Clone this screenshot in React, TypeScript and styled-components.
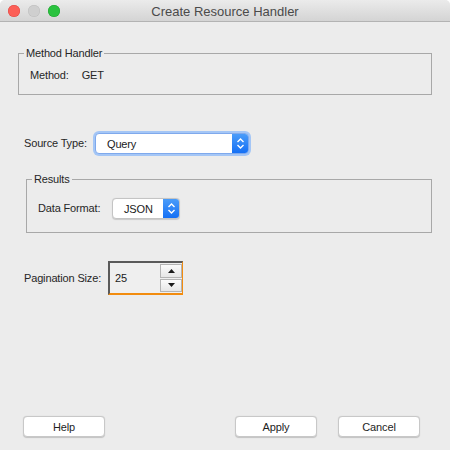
import React from "react";
import styled, { createGlobalStyle } from "styled-components";

const GlobalStyle = createGlobalStyle`
  html, body {
    margin: 0;
    padding: 0;
    background: #ffffff;
  }
  body {
    font-family: "Liberation Sans", Arial, sans-serif;
    -webkit-font-smoothing: antialiased;
  }
`;

const Window = styled.div`
  width: 450px;
  height: 450px;
  background: #ececec;
  border-radius: 5px 5px 0 0;
  overflow: hidden;
  display: flex;
  flex-direction: column;
  box-sizing: border-box;
`;

const TitleBar = styled.div`
  height: 21px;
  flex: none;
  display: flex;
  align-items: center;
  position: relative;
  background: linear-gradient(#ebebeb, #d4d4d4);
  border-bottom: 1px solid #b3b3b3;
`;

const Lights = styled.div`
  display: flex;
  gap: 8px;
  padding-left: 8px;
  padding-top: 1px;
`;

const Light = styled.span<{ $color: string; $edge: string }>`
  width: 12px;
  height: 12px;
  border-radius: 50%;
  background: ${(p) => p.$color};
  box-shadow: inset 0 0 0 0.5px ${(p) => p.$edge};
`;

const Title = styled.div`
  position: absolute;
  left: 0;
  right: 0;
  top: 0;
  bottom: 0;
  display: flex;
  align-items: center;
  justify-content: center;
  font-size: 13px;
  color: #4a4a4a;
  pointer-events: none;
  padding-top: 1px;
`;

const Body = styled.div`
  flex: 1;
  display: flex;
  flex-direction: column;
  padding: 0 18px 13px 18px;
  font-size: 11px;
  letter-spacing: -0.15px;
  color: #262626;
`;

const Group = styled.div<{ $top: number; $indent?: number }>`
  position: relative;
  margin-top: ${(p) => p.$top}px;
  margin-left: ${(p) => p.$indent ?? 0}px;
  border: 1px solid #a8a8a8;
`;

const Legend = styled.span`
  position: absolute;
  top: -7px;
  left: 5px;
  padding: 0 2px;
  line-height: 13px;
  background: #ececec;
`;

const GroupInner = styled.div<{ $pad: string }>`
  padding: ${(p) => p.$pad};
`;

const Row = styled.div<{ $top?: number; $left?: number }>`
  display: flex;
  align-items: center;
  margin-top: ${(p) => p.$top ?? 0}px;
  padding-left: ${(p) => p.$left ?? 0}px;
`;

const Label = styled.span<{ $width?: number }>`
  line-height: 15px;
  ${(p) => (p.$width ? `width: ${p.$width}px;` : "")}
  flex: none;
`;

const Value = styled.span`
  line-height: 15px;
  margin-left: 13px;
`;

const Combo = styled.div<{ $width: number; $focused?: boolean }>`
  width: ${(p) => p.$width}px;
  height: 21px;
  box-sizing: border-box;
  display: flex;
  align-items: stretch;
  background: #ffffff;
  border-radius: 4px;
  border: 1px solid ${(p) => (p.$focused ? "#7fa9ec" : "#c4c4c4")};
  box-shadow: ${(p) =>
    p.$focused
      ? "0 0 0 2px #a4c6f6"
      : "0 0.5px 1px rgba(0,0,0,0.15)"};
  overflow: hidden;
`;

const ComboText = styled.span`
  flex: 1;
  display: flex;
  align-items: center;
  padding-left: 11px;
  color: #1a1a1a;
`;

const ComboArrow = styled.span`
  width: 16px;
  flex: none;
  display: flex;
  align-items: center;
  justify-content: center;
  background: linear-gradient(#4a9cf9, #1570f5);
`;

const Spinner = styled.div`
  display: flex;
  width: 75px;
  height: 34px;
  box-sizing: border-box;
  border-top: 2px solid #5a5a5a;
  border-left: 2px solid #5a5a5a;
  border-bottom: 2px solid #f28c0f;
  border-right: 1px solid #f28c0f;
  background: #efefef;
`;

const SpinField = styled.div`
  flex: 1;
  display: flex;
  align-items: center;
  padding-left: 5px;
  color: #1a1a1a;
`;

const SpinButtons = styled.div`
  width: 22px;
  display: flex;
  flex-direction: column;
  gap: 1px;
  padding: 1px 0;
`;

const SpinButton = styled.div`
  flex: 1;
  display: flex;
  align-items: center;
  justify-content: center;
  border: 1px solid #b4b4b4;
  background: linear-gradient(#fbfbfb, #e6e6e6);
`;

const ButtonBar = styled.div`
  margin-top: auto;
  display: flex;
  align-items: center;
  padding-left: 5px;
  padding-right: 12px;
`;

const Spacer = styled.div`
  flex: 1;
`;

const Button = styled.button<{ $gap?: number }>`
  width: 82px;
  height: 21px;
  flex: none;
  margin-left: ${(p) => p.$gap ?? 0}px;
  background: #ffffff;
  border: 1px solid #c8c8c8;
  border-radius: 4px;
  box-shadow: 0 0.5px 1px rgba(0, 0, 0, 0.18);
  font-family: "Liberation Sans", Arial, sans-serif;
  font-size: 11px;
  letter-spacing: -0.15px;
  color: #1e1e1e;
  padding: 0;
`;

const Chevrons = () => (
  <svg width="9" height="13" viewBox="0 0 9 13">
    <path d="M1.5 5 L4.5 2 L7.5 5" fill="none" stroke="#fff" strokeWidth="1.4" />
    <path d="M1.5 8 L4.5 11 L7.5 8" fill="none" stroke="#fff" strokeWidth="1.4" />
  </svg>
);

const Tri = ({ up }: { up?: boolean }) => (
  <svg width="7" height="4" viewBox="0 0 7 4">
    <path d={up ? "M0 4 L3.5 0 L7 4 Z" : "M0 0 L7 0 L3.5 4 Z"} fill="#1a1a1a" />
  </svg>
);

export default function App() {
  return (
    <>
      <GlobalStyle />
      <Window>
        <TitleBar>
          <Lights>
            <Light $color="#fc5f57" $edge="#df4744" />
            <Light $color="#cfcfcf" $edge="#bdbdbd" />
            <Light $color="#2ac23f" $edge="#1ea22f" />
          </Lights>
          <Title>Create Resource Handler</Title>
        </TitleBar>
        <Body>
          <Group $top={31}>
            <Legend>Method Handler</Legend>
            <GroupInner $pad="14px 11px 11px">
              <Row>
                <Label>Method:</Label>
                <Value>GET</Value>
              </Row>
            </GroupInner>
          </Group>

          <Row $top={38} $left={6}>
            <Label $width={71}>Source Type:</Label>
            <Combo $width={154} $focused>
              <ComboText>Query</ComboText>
              <ComboArrow>
                <Chevrons />
              </ComboArrow>
            </Combo>
          </Row>

          <Group $top={25} $indent={8}>
            <Legend>Results</Legend>
            <GroupInner $pad="18px 11px 13px">
              <Row>
                <Label $width={74}>Data Format:</Label>
                <Combo $width={68}>
                  <ComboText>JSON</ComboText>
                  <ComboArrow>
                    <Chevrons />
                  </ComboArrow>
                </Combo>
              </Row>
            </GroupInner>
          </Group>

          <Row $top={28} $left={6}>
            <Label $width={84}>Pagination Size:</Label>
            <Spinner>
              <SpinField>25</SpinField>
              <SpinButtons>
                <SpinButton>
                  <Tri up />
                </SpinButton>
                <SpinButton>
                  <Tri />
                </SpinButton>
              </SpinButtons>
            </Spinner>
          </Row>

          <ButtonBar>
            <Button>Help</Button>
            <Spacer />
            <Button>Apply</Button>
            <Button $gap={21}>Cancel</Button>
          </ButtonBar>
        </Body>
      </Window>
    </>
  );
}
